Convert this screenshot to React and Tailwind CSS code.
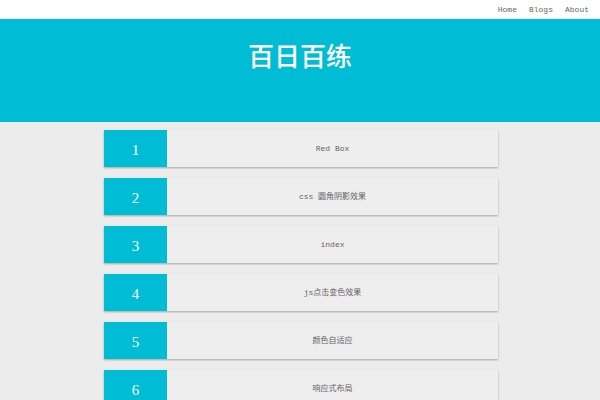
import React from "react";

const items = [
  "Red Box",
  "css 圆角阴影效果",
  "index",
  "js点击变色效果",
  "颜色自适应",
  "响应式布局",
];

export default function App() {
  const serif = { fontFamily: '"Liberation Serif", "Noto Sans CJK SC", serif' };
  const mono = { fontFamily: '"Liberation Mono", "Noto Sans CJK SC", monospace' };
  return (
    <div className="w-[600px] h-[400px] overflow-hidden bg-[#ececec]" style={serif}>
      <nav className="h-[19px] bg-white flex items-center justify-end gap-[12px] pr-[11px] text-[8px] text-[#666]" style={mono}>
        <span>Home</span>
        <span>Blogs</span>
        <span>About</span>
      </nav>
      <header className="h-[103px] bg-[#00bcd4] flex justify-center pt-[21px]">
        <h1 className="text-white text-[26px] leading-[30px] font-medium" style={{ fontFamily: '"Noto Sans CJK SC", sans-serif' }}>
          百日百练
        </h1>
      </header>
      <main className="flex flex-col gap-[11px] pt-[8px] pl-[104px]">
        {items.map((t, i) => (
          <div
            key={i}
            className="w-[394px] h-[37px] shrink-0 flex bg-[#eeeeee] shadow-[0_1px_2px_rgba(0,0,0,0.3)]"
          >
            <div className="w-[63px] bg-[#00bcd4] flex items-center justify-center pt-[3px] text-white text-[15px]">
              {i + 1}
            </div>
            <div className="flex-1 flex items-center justify-center pt-[1px] text-[8px] text-[#665f66]" style={mono}>
              {t}
            </div>
          </div>
        ))}
      </main>
    </div>
  );
}
